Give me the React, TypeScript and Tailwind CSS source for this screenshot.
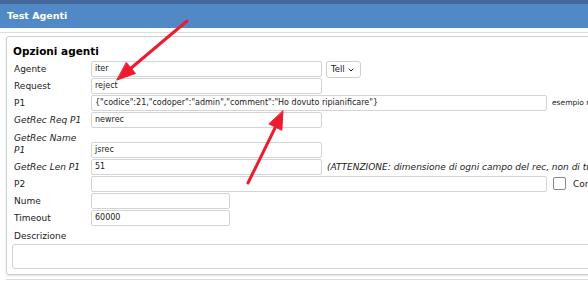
import { ChevronDown } from 'lucide-react'

function Row({ label, italic, children }: { label: string; italic?: boolean; children?: React.ReactNode }) {
  return (
    <div className="flex h-[17px] items-start">
      <div className={`w-[78px] shrink-0 pl-[1px] pt-[2px] text-[9px] leading-[12px] text-[#222] ${italic ? 'italic' : ''}`}>{label}</div>
      {children}
    </div>
  )
}

function Field({ value = '', w = 'w-[231px]' }: { value?: string; w?: string }) {
  return (
    <div
      className={`${w} h-[16px] shrink-0 rounded-[2px] border border-[#d4d4d4] bg-white pl-[3px] text-[8px] leading-[14px] text-[#222] whitespace-nowrap overflow-hidden`}
    >
      {value}
    </div>
  )
}

function Arrows() {
  return (
    <svg className="pointer-events-none absolute left-0 top-0" width="588" height="282" viewBox="0 0 588 282">
      <g stroke="#ec1c2e" strokeWidth="3" strokeLinecap="round" fill="#ec1c2e">
        <line x1="187" y1="21" x2="130" y2="69" />
        <polygon points="117,80 135.5,73.4 126.5,62.7" strokeWidth="1" strokeLinejoin="round" />
        <line x1="248" y1="183" x2="276" y2="126" />
        <polygon points="283,111 281.8,130.3 269.2,124.1" strokeWidth="1" strokeLinejoin="round" />
      </g>
    </svg>
  )
}

export default function App() {
  return (
    <div className="relative h-[282px] w-[588px] overflow-hidden bg-white font-['DejaVu_Sans',sans-serif]">
      <div className="h-[4px] bg-[#44689b]" />
      <div className="flex h-[24px] items-center bg-[#5189c7] px-[7px] text-[9.5px] font-bold text-white">Test Agenti</div>
      <div className="mt-[4px] border-t border-[#dcdcdc] pl-[6px] pt-[3px]">
        <div className="w-[640px] rounded-[3px] border border-[#cfcfcf] px-[6px] pb-[5px] pt-[7px] shadow-[0_1px_2px_rgba(0,0,0,0.12)]">
          <div className="h-[17px] text-[10.5px] font-bold leading-[14px] text-black">Opzioni agenti</div>
          <Row label="Agente">
            <Field value="iter" />
            <div className="ml-[4px] flex h-[17px] w-[35px] items-center gap-[2px] rounded-[3px] border border-[#cfcfcf] pl-[4px] text-[8.5px] text-[#222]">
              Tell
              <ChevronDown className="h-[8px] w-[8px]" strokeWidth={3} />
            </div>
          </Row>
          <Row label="Request">
            <Field value="reject" />
          </Row>
          <Row label="P1">
            <Field w="w-[456px]" value={'{"codice":21,"codoper":"admin","comment":"Ho dovuto ripianificare"}'} />
            <span className="ml-[5px] pt-[3px] text-[7.5px] leading-[10px] text-[#222] whitespace-nowrap">esempio r</span>
          </Row>
          <Row label="GetRec Req P1" italic>
            <Field value="newrec" />
          </Row>
          <div className="flex h-[30px] items-start">
            <div className="w-[78px] shrink-0 pl-[1px] pt-[3px] text-[9px] italic leading-[12px] text-[#222]">
              GetRec Name
              <br />
              P1
            </div>
            <div className="pt-[13px]">
              <Field value="jsrec" />
            </div>
          </div>
          <Row label="GetRec Len P1" italic>
            <Field value="51" />
            <span className="ml-[5px] pt-[3px] text-[9px] italic leading-[11px] text-[#222] whitespace-nowrap">
              (ATTENZIONE: dimensione di ogni campo del rec, non di tutto il rec)
            </span>
          </Row>
          <Row label="P2">
            <Field w="w-[456px]" />
            <div className="ml-[6px] mt-[1px] h-[13px] w-[13px] shrink-0 rounded-[2px] border border-[#888]" />
            <span className="ml-[7px] pt-[2px] text-[9px] leading-[12px] text-[#222] whitespace-nowrap">Corrente</span>
          </Row>
          <Row label="Nume">
            <Field w="w-[139px]" />
          </Row>
          <Row label="Timeout">
            <Field w="w-[139px]" value="60000" />
          </Row>
          <div className="h-[17px] pl-[1px] pt-[3px] text-[9px] leading-[12px] text-[#222]">Descrizione</div>
          <div className="ml-[-1px] h-[25px] w-[620px] rounded-[3px] border border-[#d4d4d4]" />
        </div>
        <div className="mt-[4px] h-[4px] border-t border-[#dcdcdc]" />
      </div>
      <Arrows />
    </div>
  )
}
